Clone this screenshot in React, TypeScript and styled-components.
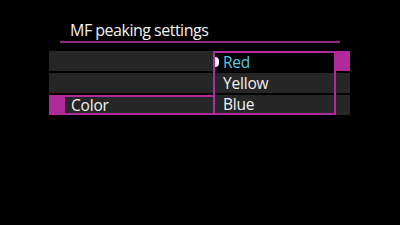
import { createGlobalStyle, styled } from 'styled-components'

const magenta = '#b12a9d'

const GlobalStyle = createGlobalStyle`
  html, body {
    margin: 0;
    padding: 0;
    background: #000;
  }
  body {
    width: 400px;
    height: 225px;
    overflow: hidden;
    font-family: "Open Sans", "Noto Sans", sans-serif;
    color: #f2f2f2;
  }
`

type MenuRow = {
  id: number
  label: string
  selected?: boolean
}

const rows: MenuRow[] = [
  { id: 1, label: '' },
  { id: 2, label: '' },
  { id: 3, label: 'Color', selected: true },
]

// heights line up with the menu rows behind the popup (border eats 2px top/bottom)
const options = [
  { id: 'red', label: 'Red', height: 18, active: true },
  { id: 'yellow', label: 'Yellow', height: 20 },
  { id: 'blue', label: 'Blue', height: 18 },
]

export default function App() {
  return <Screen>
    <GlobalStyle />
    <Header>MF peaking settings</Header>

    <List>
      {rows.map(row => (
        <Row key={row.id}>
          <Marker $selected={row.selected} />
          <RowBody $selected={row.selected}>{row.label}</RowBody>
          <Track />
        </Row>
      ))}

      <Dropdown>
        {options.map(option => (
          <Option key={option.id} $height={option.height} $active={option.active}>
            {option.active && <Cursor />}
            {option.label}
          </Option>
        ))}
      </Dropdown>
      <ScrollThumb />
    </List>
  </Screen>
}

const Screen = styled.div`
  width: 400px;
  height: 225px;
  box-sizing: border-box;
  padding: 21px 50px 0 49px;
`
const Header = styled.div`
  margin: 0 10px 0 11px;
  padding: 0 0 1px 10px;
  font-size: 16px;
  letter-spacing: -0.5px;
  line-height: 19px;
  border-bottom: 2px solid #8e2a82;
`
const List = styled.div`
  position: relative;
  margin-top: 8px;
  display: flex;
  flex-direction: column;
  gap: 2px;
`
const Row = styled.div`
  height: 20px;
  display: flex;
  background: #262626;
`
const Marker = styled.div<{ $selected?: boolean }>`
  width: 16px;
  background: ${p => p.$selected ? magenta : 'transparent'};
`
const RowBody = styled.div<{ $selected?: boolean }>`
  flex: 1;
  box-sizing: border-box;
  padding-left: 6px;
  font-size: 15.5px;
  letter-spacing: -0.2px;
  line-height: 16px;
  border-top: 2px solid ${p => p.$selected ? magenta : 'transparent'};
  border-bottom: 2px solid ${p => p.$selected ? magenta : 'transparent'};
`
const Track = styled.div`
  width: 14px;
`
const Dropdown = styled.div`
  position: absolute;
  left: 164px;
  top: 0;
  width: 123px;
  height: 64px;
  box-sizing: border-box;
  border: 2px solid ${magenta};
  background: #000;
  display: flex;
  flex-direction: column;
  gap: 2px;
`
const Option = styled.div<{ $height: number, $active?: boolean }>`
  position: relative;
  height: ${p => p.$height}px;
  flex: none;
  padding-left: 8px;
  font-size: 15.5px;
  letter-spacing: -0.2px;
  line-height: ${p => p.$height + 1}px;
  white-space: nowrap;
  background: ${p => p.$active ? '#000' : '#262626'};
  color: ${p => p.$active ? '#5cc6df' : '#f2f2f2'};
`
const Cursor = styled.span`
  position: absolute;
  left: 0;
  top: 4px;
  width: 4px;
  height: 10px;
  border-radius: 0 5px 5px 0;
  background: #fff;
`
const ScrollThumb = styled.div`
  position: absolute;
  left: 287px;
  top: 0;
  width: 14px;
  height: 20px;
  background: ${magenta};
`
